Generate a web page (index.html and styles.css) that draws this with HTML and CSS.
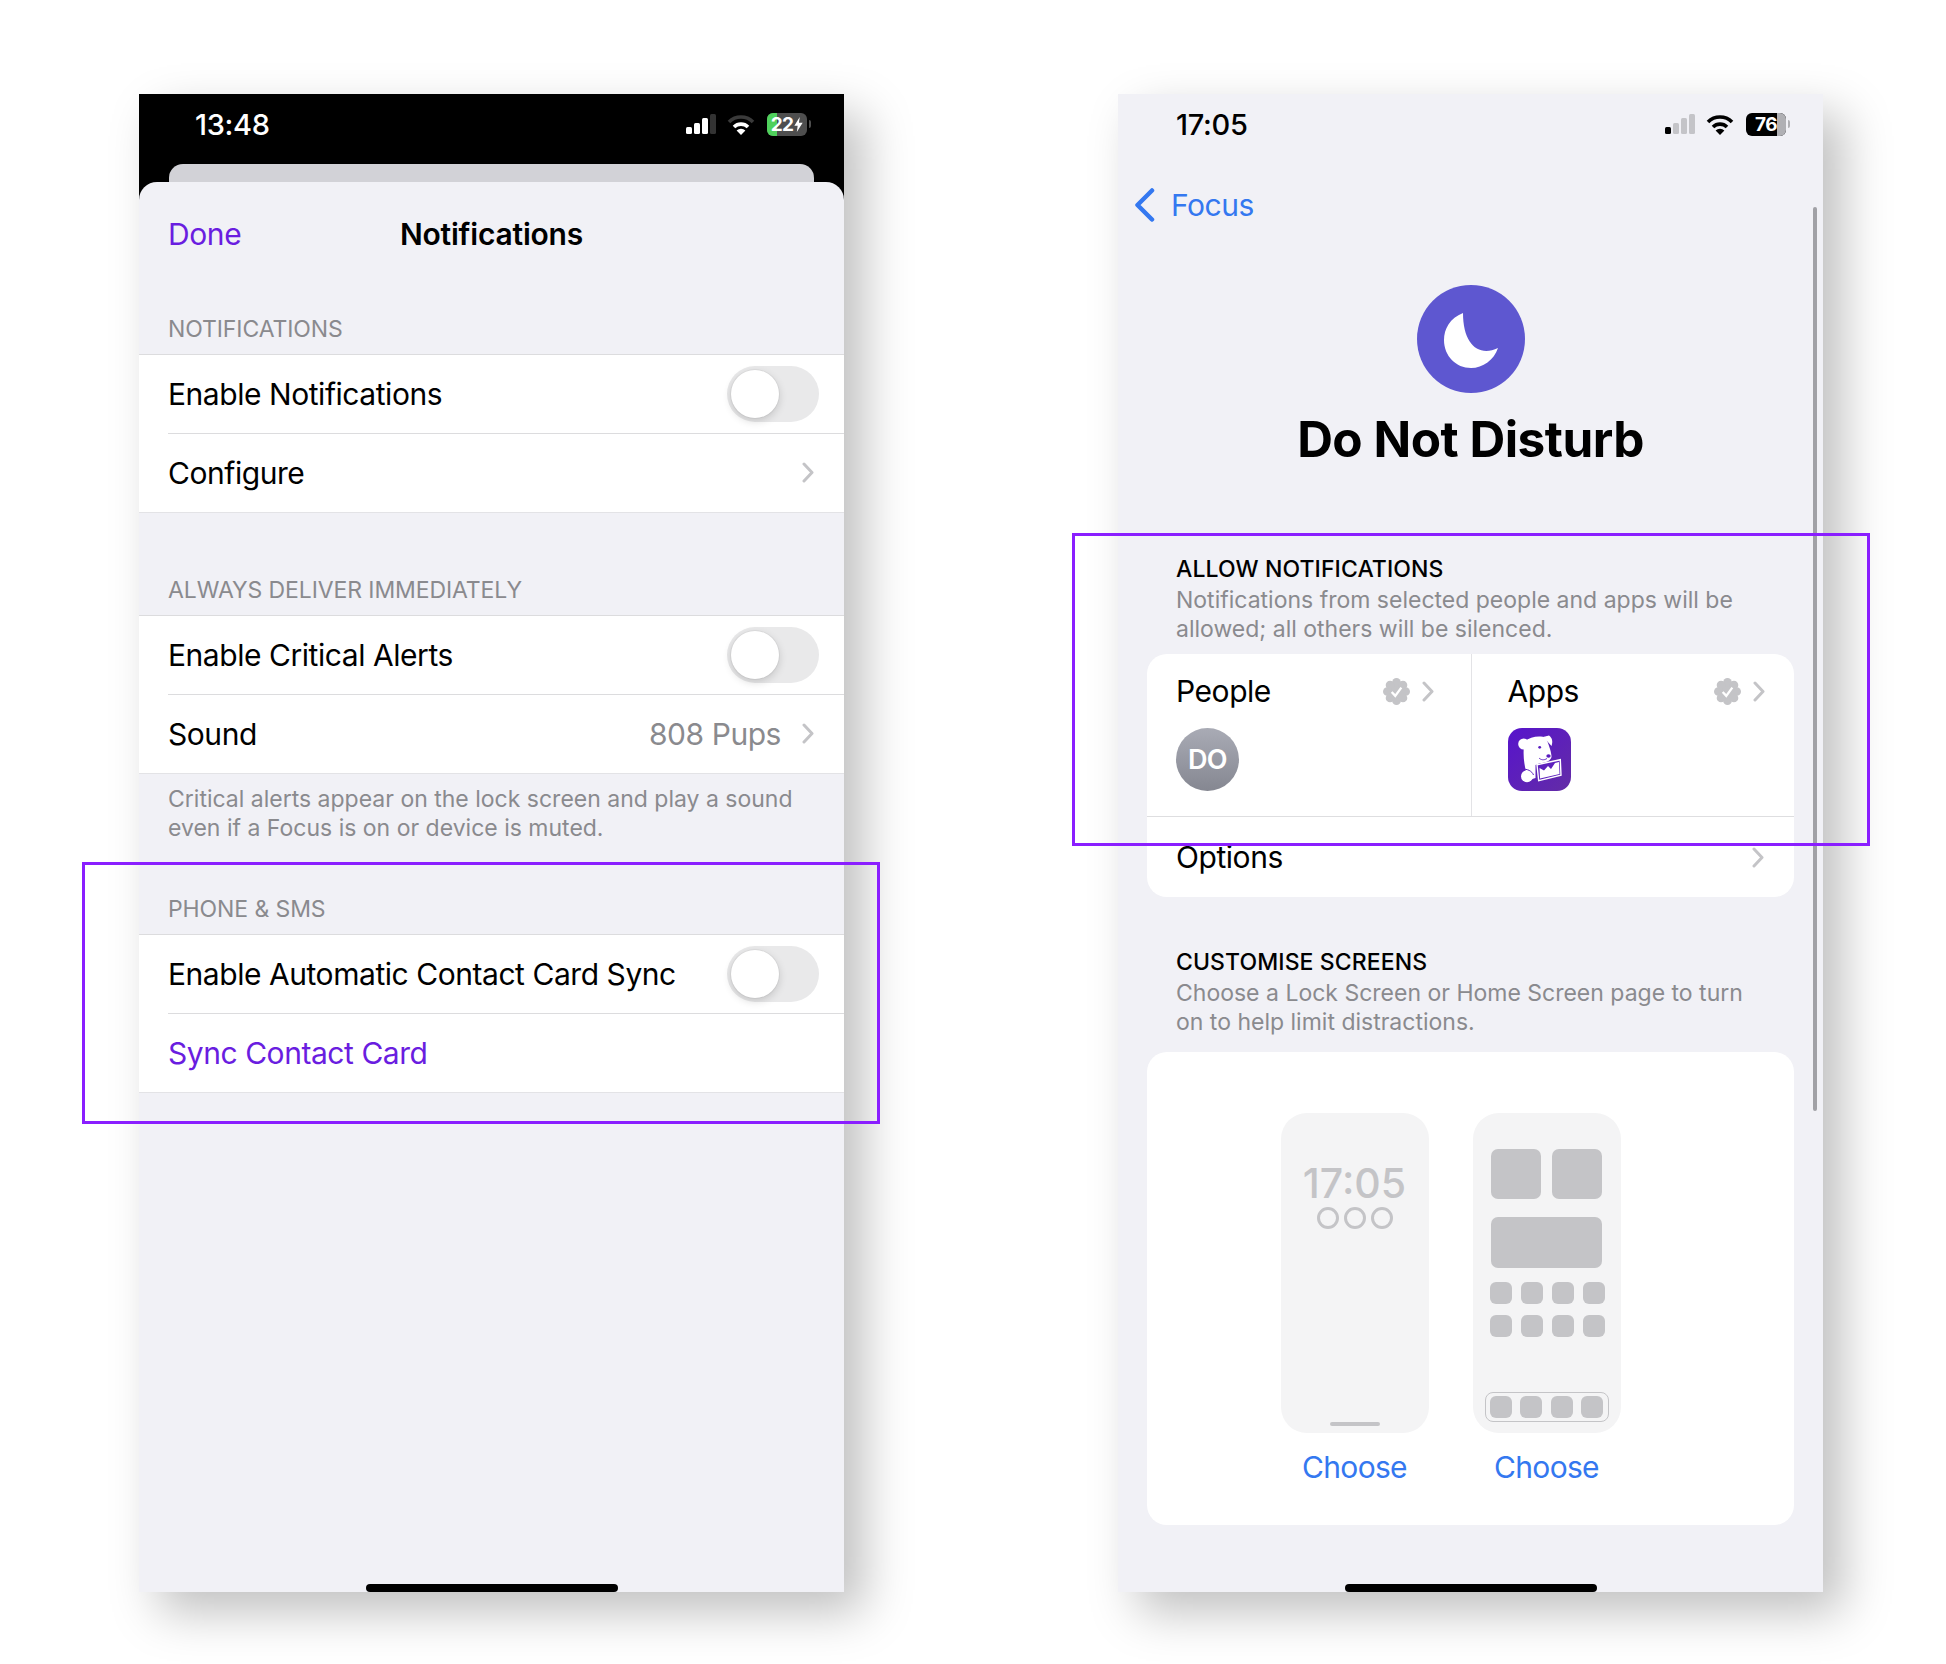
FILE: index.html
```html
<!DOCTYPE html>
<html>

<head>
	<meta charset="utf-8">
	<title>Notifications and Do Not Disturb</title>
	<link rel="stylesheet" href="styles.css">
</head>

<body>
	<div class="screens">

		<!-- left phone: app notification settings -->
		<section class="phone">
			<div class="darkTop">
				<div class="statusBar statusLight">
					<span class="clock">13:48</span>
					<div class="statusIcons">
						<svg class="signal" viewBox="0 0 31 20"><rect x="0" y="13" width="6" height="7" rx="1.5" fill="#fff"/><rect x="8" y="9" width="6" height="11" rx="1.5" fill="#fff"/><rect x="16" y="4" width="6" height="16" rx="1.5" fill="#fff"/><rect x="24" y="0" width="6" height="20" rx="1.5" fill="#333"/></svg>
						<svg class="wifi" viewBox="0 0 28 21"><path d="M2 8A17 17 0 0 1 26 8" fill="none" stroke="#3a3a3a" stroke-width="3.6"/><path d="M7 13A10 10 0 0 1 21 13" fill="none" stroke="#fff" stroke-width="3.6"/><path d="M14 21L9.6 16.4A6.5 6.5 0 0 1 18.4 16.4Z" fill="#fff"/></svg>
						<div class="battery batteryCharging"><i class="batteryFill"></i><span>22</span><svg class="bolt" viewBox="0 0 10 18"><path d="M6.5 0L0 10.5H4L3 18L10 7H5.5Z" fill="#fff"/></svg></div>
						<i class="batteryTip tipDark"></i>
					</div>
				</div>
				<div class="backCard"></div>
			</div>

			<div class="sheet">
				<div class="sheetNav">
					<a class="done">Done</a>
					<h1 class="sheetTitle">Notifications</h1>
				</div>

				<div class="groupLabel labelFirst">NOTIFICATIONS</div>
				<div class="group">
					<div class="row">
						<span>Enable Notifications</span>
						<div class="toggle"><i></i></div>
					</div>
					<div class="row rowNav">
						<span>Configure</span>
						<svg class="chevron" viewBox="0 0 12 21"><path d="M2 2L10 10.5L2 19"/></svg>
					</div>
				</div>

				<div class="groupLabel labelGap">ALWAYS DELIVER IMMEDIATELY</div>
				<div class="group">
					<div class="row">
						<span>Enable Critical Alerts</span>
						<div class="toggle"><i></i></div>
					</div>
					<div class="row rowNav">
						<span>Sound</span>
						<div class="rowRight">
							<span class="rowValue">808 Pups</span>
							<svg class="chevron" viewBox="0 0 12 21"><path d="M2 2L10 10.5L2 19"/></svg>
						</div>
					</div>
				</div>
				<p class="groupNote">Critical alerts appear on the lock screen and play a sound<br>even if a Focus is on or device is muted.</p>

				<div class="groupLabel noteGap">PHONE &amp; SMS</div>
				<div class="group">
					<div class="row">
						<span>Enable Automatic Contact Card Sync</span>
						<div class="toggle"><i></i></div>
					</div>
					<div class="row">
						<a class="linkRow">Sync Contact Card</a>
					</div>
				</div>
			</div>
			<div class="homeBar"></div>
		</section>

		<!-- right phone: focus settings -->
		<section class="phone phoneFocus">
			<div class="statusBar statusDark">
				<span class="clock">17:05</span>
				<div class="statusIcons">
					<svg class="signal" viewBox="0 0 31 20"><rect x="0" y="13" width="6" height="7" rx="1.5" fill="#000"/><rect x="8" y="9" width="6" height="11" rx="1.5" fill="#c4c4c8"/><rect x="16" y="4" width="6" height="16" rx="1.5" fill="#c4c4c8"/><rect x="24" y="0" width="6" height="20" rx="1.5" fill="#c4c4c8"/></svg>
					<svg class="wifi" viewBox="0 0 28 21"><path d="M2 8A17 17 0 0 1 26 8" fill="none" stroke="#000" stroke-width="3.6"/><path d="M7 13A10 10 0 0 1 21 13" fill="none" stroke="#000" stroke-width="3.6"/><path d="M14 21L9.6 16.4A6.5 6.5 0 0 1 18.4 16.4Z" fill="#000"/></svg>
					<div class="battery batteryBlack"><i class="batteryRest"></i><span>76</span></div>
					<i class="batteryTip"></i>
				</div>
			</div>

			<div class="backNav">
				<svg class="backChevron" viewBox="0 0 21 34"><path d="M18 2.5L3.5 17L18 31.5"/></svg>
				<a class="backLink">Focus</a>
			</div>

			<div class="focusIcon">
				<svg viewBox="0 0 108 108"><path d="M46 28C33 33 27 44 27 55C27 71 39 83 54 83C66 83 77 75 81 63C62 72 46 60 46 28Z" fill="#fff"/></svg>
			</div>
			<h1 class="focusTitle">Do Not Disturb</h1>

			<div class="focusHead headAllow">
				<h2>ALLOW NOTIFICATIONS</h2>
				<p>Notifications from selected people and apps will be<br>allowed; all others will be silenced.</p>
			</div>
			<div class="card">
				<div class="allowRow">
					<div class="allowCell allowPeople">
						<div class="allowTop">
							<span>People</span>
							<div class="allowMarks">
								<svg class="badge" viewBox="0 0 28 28"><g fill="#c4c4c7"><circle cx="14" cy="14" r="11"/><circle cx="14" cy="4.5" r="4.5"/><circle cx="14" cy="23.5" r="4.5"/><circle cx="4.5" cy="14" r="4.5"/><circle cx="23.5" cy="14" r="4.5"/><circle cx="7.3" cy="7.3" r="4.5"/><circle cx="20.7" cy="7.3" r="4.5"/><circle cx="7.3" cy="20.7" r="4.5"/><circle cx="20.7" cy="20.7" r="4.5"/></g><path d="M9 14.5L12.7 18.5L19 10" fill="none" stroke="#fff" stroke-width="2.4"/></svg>
								<svg class="chevron" viewBox="0 0 12 21"><path d="M2 2L10 10.5L2 19"/></svg>
							</div>
						</div>
						<div class="avatar">DO</div>
					</div>
					<div class="allowCell allowApps">
						<div class="allowTop">
							<span>Apps</span>
							<div class="allowMarks">
								<svg class="badge" viewBox="0 0 28 28"><g fill="#c4c4c7"><circle cx="14" cy="14" r="11"/><circle cx="14" cy="4.5" r="4.5"/><circle cx="14" cy="23.5" r="4.5"/><circle cx="4.5" cy="14" r="4.5"/><circle cx="23.5" cy="14" r="4.5"/><circle cx="7.3" cy="7.3" r="4.5"/><circle cx="20.7" cy="7.3" r="4.5"/><circle cx="7.3" cy="20.7" r="4.5"/><circle cx="20.7" cy="20.7" r="4.5"/></g><path d="M9 14.5L12.7 18.5L19 10" fill="none" stroke="#fff" stroke-width="2.4"/></svg>
								<svg class="chevron" viewBox="0 0 12 21"><path d="M2 2L10 10.5L2 19"/></svg>
							</div>
						</div>
						<svg class="appIcon" viewBox="0 0 63 63">
							<defs><linearGradient id="ddBg" x1="0" y1="0" x2="1" y2="1"><stop offset="0" stop-color="#5714cc"/><stop offset="1" stop-color="#632ca6"/></linearGradient></defs>
							<rect width="63" height="63" rx="14" fill="url(#ddBg)"/>
							<circle cx="15.700" cy="16" r="5.500" fill="#fff"/>
							<path d="M35 9L41 7.500C44.500 10 45 14 43.500 18L39 13Z" fill="#fff"/>
							<path d="M17 13C22 9 32 7 38 10C40 15 43 22 43.500 28C44 32 38 35 32 35L27.500 37L27.500 50L21 52C16 40 14 25 17 13Z" fill="#fff"/>
							<circle cx="19" cy="48.300" r="6" fill="#fff"/>
							<path d="M14.500 41.500C19 40.500 24 43 25.500 47" fill="none" stroke="#5d20bd" stroke-width="1"/>
							<circle cx="31.700" cy="19.300" r="1.400" fill="#5a1cc0"/>
							<ellipse cx="40.500" cy="28" rx="2.200" ry="1.700" fill="#5a1cc0"/>
							<path d="M39 30.500C36 32.500 33 32 31 30" fill="none" stroke="#5a1cc0" stroke-width="0.900"/>
							<path d="M29 36.700L52.300 31.700L53 47.300L30.700 52.700Z" fill="#5d20bd" stroke="#fff" stroke-width="1.400"/>
							<path d="M32 50.500L31.500 40L36 42.500L40 38L43 41L47 35L51 34L51.500 46Z" fill="#fff"/>
						</svg>
					</div>
				</div>
				<div class="optionsRow">
					<span>Options</span>
					<svg class="chevron" viewBox="0 0 12 21"><path d="M2 2L10 10.5L2 19"/></svg>
				</div>
			</div>

			<div class="focusHead headCustom">
				<h2>CUSTOMISE SCREENS</h2>
				<p>Choose a Lock Screen or Home Screen page to turn<br>on to help limit distractions.</p>
			</div>
			<div class="card cardScreens">
				<div class="choice">
					<div class="mock mockLock">
						<div class="mockTime">17:05</div>
						<div class="mockDots"><i></i><i></i><i></i></div>
						<div class="mockBar"></div>
					</div>
					<a class="chooseLink">Choose</a>
				</div>
				<div class="choice">
					<div class="mock mockHome">
						<div class="mockWidgets"><i></i><i></i><i class="widgetWide"></i></div>
						<div class="mockApps">
							<i></i><i></i><i></i><i></i>
							<i></i><i></i><i></i><i></i>
						</div>
						<div class="mockDock"><i></i><i></i><i></i><i></i></div>
					</div>
					<a class="chooseLink">Choose</a>
				</div>
			</div>

			<div class="homeBar"></div>
			<div class="scrollThumb"></div>
		</section>
	</div>

	<div class="highlight highlightLeft"></div>
	<div class="highlight highlightRight"></div>
</body>

</html>
```

FILE: styles.css
```css
* {
	box-sizing: border-box;
}

html,
body {
	margin: 0;
	height: 1664px;
	overflow: hidden;
	background-color: #fff;
}

body {
	position: relative;
	font-family: Inter, "Noto Sans", sans-serif;
	color: #000;
}

h1,
h2,
p {
	margin: 0;
}

.screens {
	display: flex;
	gap: 274px;
	padding: 94px 0 0 139px;
}

.phone {
	position: relative;
	display: flex;
	flex-direction: column;
	width: 705px;
	height: 1498px;
	background-color: #f1f1f6;
	box-shadow: 20px 20px 45px rgba(0, 0, 0, 0.25);
	overflow: hidden;
}

/* status bar */

.statusBar {
	display: flex;
	align-items: center;
	justify-content: space-between;
	height: 60px;
	padding: 0 33px 0 56px;
	flex-shrink: 0;
}

.statusLight {
	color: #fff;
}

.statusDark {
	padding-left: 58px;
}

.clock {
	font-size: 29px;
	font-weight: 500;
	letter-spacing: -0.3px;
}

.statusIcons {
	display: flex;
	align-items: center;
}

.signal {
	width: 31px;
	height: 20px;
	margin-right: 10px;
}

.wifi {
	width: 28px;
	height: 21px;
	margin-right: 12px;
}

.battery {
	position: relative;
	display: flex;
	align-items: center;
	justify-content: center;
	width: 40px;
	height: 23px;
	border-radius: 6px;
	overflow: hidden;
	font-size: 19px;
	font-weight: 700;
	color: #fff;
}

.battery span {
	position: relative;
	letter-spacing: -0.6px;
}

.batteryCharging {
	background-color: #4e4e4e;
}

.batteryBlack {
	background-color: #000;
}

.batteryFill {
	position: absolute;
	left: 0;
	top: 0;
	bottom: 0;
	width: 10px;
	background-color: #4fd15c;
}

.batteryRest {
	position: absolute;
	right: 0;
	top: 0;
	bottom: 0;
	width: 9px;
	background-color: #b0b0b4;
}

.bolt {
	position: relative;
	width: 9px;
	height: 15px;
	margin-left: 1px;
}

.batteryTip {
	width: 2px;
	height: 8px;
	margin-left: 2px;
	border-radius: 0 2px 2px 0;
	background-color: #b0b0b4;
}

.tipDark {
	background-color: #4e4e4e;
}

/* left phone */

.darkTop {
	height: 106px;
	background-color: #000;
	flex-shrink: 0;
}

.backCard {
	height: 18px;
	margin: 10px 30px 0;
	border-radius: 14px 14px 0 0;
	background-color: #d2d2d7;
}

.sheet {
	position: relative;
	flex: 1;
	margin-top: -18px;
	border-radius: 18px 18px 0 0;
	background-color: #f1f1f6;
}

.sheetNav {
	position: relative;
	display: flex;
	align-items: center;
	justify-content: center;
	height: 103px;
	padding-top: 1px;
}

.done {
	position: absolute;
	left: 29px;
	font-size: 30px;
	letter-spacing: -0.4px;
	color: #6a1de0;
}

.sheetTitle {
	font-size: 30px;
	font-weight: 600;
	letter-spacing: -0.2px;
}

.groupLabel {
	height: 40px;
	padding: 0 29px 10px;
	font-size: 23px;
	line-height: 30px;
	letter-spacing: -0.1px;
	color: #8a8a8e;
}

.labelFirst {
	margin-top: 29px;
}

.labelGap {
	margin-top: 62px;
}

.noteGap {
	margin-top: 51px;
}

.group {
	border-top: 1px solid #dcdcde;
	border-bottom: 1px solid #e3e3e6;
	background-color: #fff;
}

.row {
	position: relative;
	display: flex;
	align-items: center;
	justify-content: space-between;
	height: 78px;
	padding: 0 25px 0 29px;
	font-size: 30px;
	letter-spacing: -0.45px;
}

.row + .row {
	height: 79px;
}

.row + .row::before {
	content: "";
	position: absolute;
	left: 29px;
	right: 0;
	top: 0;
	border-top: 1px solid #dcdcde;
}

.rowNav {
	padding-right: 30px;
}

.rowRight {
	display: flex;
	align-items: center;
	gap: 21px;
}

.rowValue {
	color: #8a8a8e;
}

.linkRow {
	color: #6a1de0;
}

.chevron {
	width: 12px;
	height: 21px;
	fill: none;
	stroke: #c4c4c7;
	stroke-width: 3;
	stroke-linecap: round;
	stroke-linejoin: round;
}

.toggle {
	width: 92px;
	height: 56px;
	padding: 4px;
	border-radius: 28px;
	background-color: #e9e9ea;
}

.toggle i {
	display: block;
	width: 48px;
	height: 48px;
	border-radius: 50%;
	background-color: #fff;
	box-shadow: 0 3px 8px rgba(0, 0, 0, 0.16), 0 0 0 1px rgba(0, 0, 0, 0.04);
}

.groupNote {
	padding: 11px 29px 0;
	font-size: 23px;
	line-height: 29px;
	color: #8a8a8e;
}

.homeBar {
	position: absolute;
	left: 227px;
	bottom: 0;
	width: 252px;
	height: 8px;
	border-radius: 4px;
	background-color: #000;
}

/* right phone */

.backNav {
	display: flex;
	align-items: center;
	height: 102px;
	padding-left: 16px;
	flex-shrink: 0;
}

.backChevron {
	width: 21px;
	height: 34px;
	margin-right: 16px;
	fill: none;
	stroke: #3478f0;
	stroke-width: 4.5;
	stroke-linecap: round;
	stroke-linejoin: round;
}

.backLink {
	font-size: 30px;
	letter-spacing: -0.45px;
	color: #3478f0;
}

.focusIcon {
	width: 108px;
	height: 108px;
	margin: 29px auto 0;
	border-radius: 50%;
	background-color: #5e57d0;
	flex-shrink: 0;
}

.focusIcon svg {
	display: block;
}

.focusTitle {
	margin-top: 18px;
	font-size: 49.5px;
	line-height: 56px;
	font-weight: 700;
	text-align: center;
	letter-spacing: -0.5px;
}

.focusHead {
	padding: 0 29px 0 58px;
}

.focusHead h2 {
	margin-bottom: 2px;
	font-size: 23px;
	line-height: 30px;
	font-weight: 500;
	letter-spacing: 0.1px;
}

.focusHead p {
	font-size: 23px;
	line-height: 29px;
	color: #8a8a8e;
}

.headAllow {
	margin-top: 87px;
	margin-bottom: 10px;
}

.headCustom {
	margin-top: 50px;
	margin-bottom: 15px;
}

.card {
	margin: 0 29px;
	border-radius: 20px;
	background-color: #fff;
	flex-shrink: 0;
}

.allowRow {
	display: flex;
	height: 163px;
	border-bottom: 1px solid #dedee0;
}

.allowCell {
	width: 50%;
	padding: 20px 29px 0 29px;
	font-size: 30px;
	letter-spacing: -0.45px;
}

.allowPeople {
	padding-right: 37px;
}

.allowApps {
	padding-left: 36px;
	border-left: 1px solid #e3e3e6;
}

.allowTop {
	display: flex;
	align-items: center;
	justify-content: space-between;
	height: 34px;
	margin-bottom: 20px;
}

.allowMarks {
	display: flex;
	align-items: center;
	gap: 12px;
}

.badge {
	width: 27px;
	height: 27px;
}

.avatar {
	display: flex;
	align-items: center;
	justify-content: center;
	width: 63px;
	height: 63px;
	border-radius: 50%;
	background: linear-gradient(to bottom, #a9abb5, #858791);
	font-size: 27px;
	font-weight: 600;
	letter-spacing: -0.5px;
	color: #fff;
}

.appIcon {
	display: block;
	width: 63px;
	height: 63px;
	margin-top: 2px;
}

.optionsRow {
	display: flex;
	align-items: center;
	justify-content: space-between;
	height: 80px;
	padding: 0 30px 0 29px;
	font-size: 30px;
	letter-spacing: -0.45px;
}

.cardScreens {
	display: flex;
	justify-content: center;
	gap: 44px;
	height: 473px;
	padding: 61px 40px 0 0;
}

.choice {
	display: flex;
	flex-direction: column;
	align-items: center;
}

.chooseLink {
	margin-top: 16px;
	font-size: 30px;
	line-height: 36px;
	letter-spacing: -0.7px;
	color: #3478f0;
}

.mock {
	position: relative;
	width: 148px;
	height: 320px;
	border-radius: 26px;
	background-color: #f4f4f5;
}

.mockLock {
	display: flex;
	flex-direction: column;
	align-items: center;
	padding-top: 50px;
}

.mockTime {
	font-size: 41px;
	line-height: 40px;
	font-weight: 500;
	color: #c4c4c7;
}

.mockDots {
	display: flex;
	gap: 5px;
	margin-top: 4px;
}

.mockDots i {
	width: 22px;
	height: 22px;
	border: 3px solid #c4c4c7;
	border-radius: 50%;
}

.mockBar {
	position: absolute;
	left: 49px;
	bottom: 7px;
	width: 50px;
	height: 4px;
	border-radius: 2px;
	background-color: #c4c4c7;
}

.mockHome {
	padding: 36px 18px 0;
}

.mockWidgets {
	display: grid;
	grid-template-columns: 50px 50px;
	grid-template-rows: 50px 51px;
	gap: 18px 11px;
}

.mockWidgets i,
.mockApps i,
.mockDock i {
	background-color: #c4c4c7;
}

.mockWidgets i {
	border-radius: 7px;
}

.mockWidgets .widgetWide {
	grid-column: span 2;
}

.mockApps {
	display: grid;
	grid-template-columns: repeat(4, 22px);
	grid-template-rows: 22px 22px;
	gap: 11px 9px;
	margin: 14px 0 0 -1px;
}

.mockApps i,
.mockDock i {
	width: 22px;
	height: 22px;
	border-radius: 6px;
}

.mockDock {
	display: flex;
	justify-content: space-between;
	width: 124px;
	height: 30px;
	margin: 55px 0 0 -6px;
	padding: 3px 4px;
	border: 1px solid #c4c4c7;
	border-radius: 8px;
}

.scrollThumb {
	position: absolute;
	top: 113px;
	right: 6px;
	width: 4px;
	height: 904px;
	border-radius: 2px;
	background-color: #a1a1a6;
}

/* purple call-out frames */

.highlight {
	position: absolute;
	border: 3px solid #8a1eff;
}

.highlightLeft {
	left: 82px;
	top: 862px;
	width: 798px;
	height: 262px;
}

.highlightRight {
	left: 1072px;
	top: 533px;
	width: 798px;
	height: 313px;
}
```
